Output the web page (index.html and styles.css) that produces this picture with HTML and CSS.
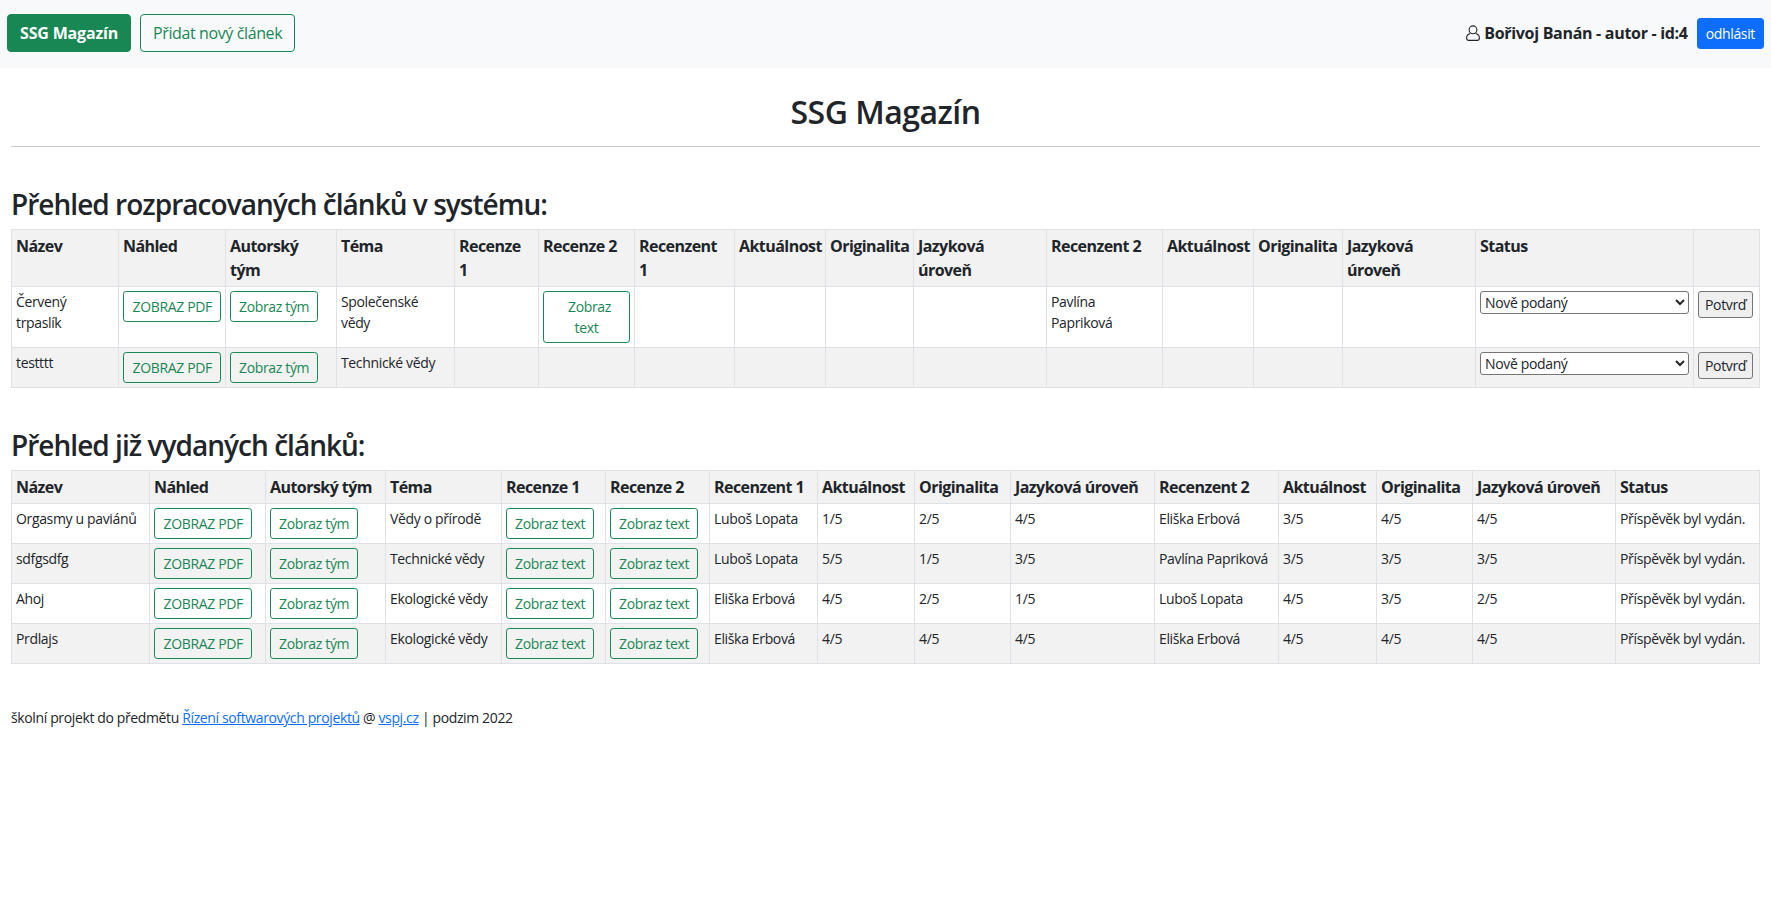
FILE: index.html
```html
<!DOCTYPE html>
<html lang="cs">
  <head>
    <meta charset="UTF-8" />
    <meta name="viewport" content="width=device-width, initial-scale=1.0" />
    <title>SSG Magazín</title>
    <link rel="stylesheet" href="styles.css">
  </head>
  <body>
    <nav class="navbar">
      <div class="nav-left">
        <a class="btn btn-brand" href="#">SSG Magazín</a>
        <a class="btn btn-line" href="#">Přidat nový článek</a>
      </div>
      <div class="nav-right">
        <svg class="user-icon" viewBox="0 0 14 16" fill="none" stroke="currentColor" stroke-width="1.1">
          <circle cx="7" cy="4.8" r="3.9"/>
          <path d="M4.2 8.6C2 9.3.6 10.8.6 13c0 1.4.8 2.4 2.2 2.4h8.4c1.4 0 2.2-1 2.2-2.4 0-2.2-1.4-3.7-3.6-4.4"/>
        </svg>
        <strong class="user-name">Bořivoj Banán - autor - id:4</strong>
        <a class="btn-sm btn-blue" href="#">odhlásit</a>
      </div>
    </nav>

    <main class="content">
      <h1 class="page-title">SSG Magazín</h1>
      <hr class="title-rule" />

      <h2 class="section-title">Přehled rozpracovaných článků v systému:</h2>
      <table class="grid grid-draft">
        <colgroup>
          <col><col><col><col><col><col><col><col><col><col><col><col><col><col><col><col>
        </colgroup>
        <thead>
          <tr>
            <th>Název</th>
            <th>Náhled</th>
            <th>Autorský<br>tým</th>
            <th>Téma</th>
            <th>Recenze<br>1</th>
            <th>Recenze 2</th>
            <th>Recenzent<br>1</th>
            <th>Aktuálnost</th>
            <th>Originalita</th>
            <th>Jazyková<br>úroveň</th>
            <th>Recenzent 2</th>
            <th>Aktuálnost</th>
            <th>Originalita</th>
            <th>Jazyková<br>úroveň</th>
            <th>Status</th>
            <th></th>
          </tr>
        </thead>
        <tbody>
          <tr>
            <td>Červený<br>trpaslík</td>
            <td><a class="btn-sm btn-line btn-caps" href="#">ZOBRAZ PDF</a></td>
            <td><a class="btn-sm btn-line" href="#">Zobraz tým</a></td>
            <td>Společenské<br>vědy</td>
            <td></td>
            <td><a class="btn-sm btn-line btn-wide" href="#">Zobraz<br>text</a></td>
            <td></td>
            <td></td>
            <td></td>
            <td></td>
            <td>Pavlína<br>Papriková</td>
            <td></td>
            <td></td>
            <td></td>
            <td>
              <select class="status-select">
                <option>Nově podaný</option>
              </select>
            </td>
            <td><button class="confirm" type="button">Potvrď</button></td>
          </tr>
          <tr>
            <td>testttt</td>
            <td><a class="btn-sm btn-line btn-caps" href="#">ZOBRAZ PDF</a></td>
            <td><a class="btn-sm btn-line" href="#">Zobraz tým</a></td>
            <td>Technické vědy</td>
            <td></td>
            <td></td>
            <td></td>
            <td></td>
            <td></td>
            <td></td>
            <td></td>
            <td></td>
            <td></td>
            <td></td>
            <td>
              <select class="status-select">
                <option>Nově podaný</option>
              </select>
            </td>
            <td><button class="confirm" type="button">Potvrď</button></td>
          </tr>
        </tbody>
      </table>

      <h2 class="section-title">Přehled již vydaných článků:</h2>
      <table class="grid grid-done">
        <colgroup>
          <col><col><col><col><col><col><col><col><col><col><col><col><col><col><col>
        </colgroup>
        <thead>
          <tr>
            <th>Název</th>
            <th>Náhled</th>
            <th>Autorský tým</th>
            <th>Téma</th>
            <th>Recenze 1</th>
            <th>Recenze 2</th>
            <th>Recenzent 1</th>
            <th>Aktuálnost</th>
            <th>Originalita</th>
            <th>Jazyková úroveň</th>
            <th>Recenzent 2</th>
            <th>Aktuálnost</th>
            <th>Originalita</th>
            <th>Jazyková úroveň</th>
            <th>Status</th>
          </tr>
        </thead>
        <tbody>
          <tr>
            <td>Orgasmy u paviánů</td>
            <td><a class="btn-sm btn-line btn-caps" href="#">ZOBRAZ PDF</a></td>
            <td><a class="btn-sm btn-line" href="#">Zobraz tým</a></td>
            <td>Vědy o přírodě</td>
            <td><a class="btn-sm btn-line" href="#">Zobraz text</a></td>
            <td><a class="btn-sm btn-line" href="#">Zobraz text</a></td>
            <td>Luboš Lopata</td>
            <td>1/5</td>
            <td>2/5</td>
            <td>4/5</td>
            <td>Eliška Erbová</td>
            <td>3/5</td>
            <td>4/5</td>
            <td>4/5</td>
            <td>Příspěvěk byl vydán.</td>
          </tr>
          <tr>
            <td>sdfgsdfg</td>
            <td><a class="btn-sm btn-line btn-caps" href="#">ZOBRAZ PDF</a></td>
            <td><a class="btn-sm btn-line" href="#">Zobraz tým</a></td>
            <td>Technické vědy</td>
            <td><a class="btn-sm btn-line" href="#">Zobraz text</a></td>
            <td><a class="btn-sm btn-line" href="#">Zobraz text</a></td>
            <td>Luboš Lopata</td>
            <td>5/5</td>
            <td>1/5</td>
            <td>3/5</td>
            <td>Pavlína Papriková</td>
            <td>3/5</td>
            <td>3/5</td>
            <td>3/5</td>
            <td>Příspěvěk byl vydán.</td>
          </tr>
          <tr>
            <td>Ahoj</td>
            <td><a class="btn-sm btn-line btn-caps" href="#">ZOBRAZ PDF</a></td>
            <td><a class="btn-sm btn-line" href="#">Zobraz tým</a></td>
            <td>Ekologické vědy</td>
            <td><a class="btn-sm btn-line" href="#">Zobraz text</a></td>
            <td><a class="btn-sm btn-line" href="#">Zobraz text</a></td>
            <td>Eliška Erbová</td>
            <td>4/5</td>
            <td>2/5</td>
            <td>1/5</td>
            <td>Luboš Lopata</td>
            <td>4/5</td>
            <td>3/5</td>
            <td>2/5</td>
            <td>Příspěvěk byl vydán.</td>
          </tr>
          <tr>
            <td>Prdlajs</td>
            <td><a class="btn-sm btn-line btn-caps" href="#">ZOBRAZ PDF</a></td>
            <td><a class="btn-sm btn-line" href="#">Zobraz tým</a></td>
            <td>Ekologické vědy</td>
            <td><a class="btn-sm btn-line" href="#">Zobraz text</a></td>
            <td><a class="btn-sm btn-line" href="#">Zobraz text</a></td>
            <td>Eliška Erbová</td>
            <td>4/5</td>
            <td>4/5</td>
            <td>4/5</td>
            <td>Eliška Erbová</td>
            <td>4/5</td>
            <td>4/5</td>
            <td>4/5</td>
            <td>Příspěvěk byl vydán.</td>
          </tr>
        </tbody>
      </table>

      <footer class="page-foot">
        školní projekt do předmětu <a href="#">Řízení softwarových projektů</a> @ <a href="#">vspj.cz</a> | podzim 2022
      </footer>
    </main>
  </body>
</html>
```

FILE: styles.css
```css
body {
  margin: 0;
  font-family: "Open Sans", "Noto Sans", sans-serif;
  font-size: 16px;
  line-height: 1.5;
  color: #212529;
  background-color: #fff;
}

a {
  text-decoration: none;
}

.navbar {
  display: flex;
  align-items: center;
  justify-content: space-between;
  height: 68px;
  padding: 0 7px 2px;
  box-sizing: border-box;
  background-color: #f8f9fa;
}

.nav-left {
  display: flex;
  gap: 9px;
}

.nav-right {
  display: flex;
  align-items: center;
}

.user-icon {
  width: 14px;
  height: 16px;
  margin-right: 4px;
  margin-top: -1px;
}

.user-name {
  font-size: 16px;
  letter-spacing: -0.3px;
  margin-right: 9px;
  margin-top: -1px;
}

.btn {
  display: inline-block;
  padding: 6px 12px;
  border: 1px solid #198754;
  border-radius: 4px;
  font-size: 16px;
  letter-spacing: -0.39px;
}

.btn-brand {
  background-color: #198754;
  color: #fff;
  font-weight: 700;
  letter-spacing: -0.18px;
}

.btn-line {
  color: #198754;
}

.btn-sm {
  display: inline-block;
  padding: 4px 8px;
  border: 1px solid #198754;
  border-radius: 3.2px;
  font-size: 14px;
  line-height: 21px;
  letter-spacing: -0.35px;
  text-align: center;
}

.btn-blue {
  background-color: #0d6efd;
  border-color: #0d6efd;
  color: #fff;
}

.btn-caps {
  padding: 4px 8.5px;
  white-space: nowrap;
}

.btn-wide {
  display: block;
  padding: 4px 24px;
}

.content {
  padding: 0 11px;
}

.page-title {
  margin: 25px 0 0;
  font-size: 32px;
  font-weight: 600;
  line-height: 38px;
  text-align: center;
  letter-spacing: -0.5px;
}

.title-rule {
  height: 1px;
  margin: 15px 0 0;
  border: none;
  background-color: #ccc;
}

.section-title {
  margin: 40px 0 8px;
  font-size: 28px;
  font-weight: 600;
  line-height: 34px;
  letter-spacing: -0.97px;
}

.grid {
  width: 1748px;
  table-layout: fixed;
  border-collapse: collapse;
}

.grid th,
.grid td {
  padding: 4px;
  border: 1px solid #dee2e6;
  vertical-align: top;
  text-align: left;
}

.grid th {
  background-color: #f2f2f2;
  font-size: 16px;
  font-weight: 700;
  line-height: 24px;
  letter-spacing: -0.55px;
}

.grid td {
  font-size: 14px;
  line-height: 21px;
  letter-spacing: -0.35px;
}

.grid tbody tr:nth-child(even) td {
  background-color: #f2f2f2;
}

.grid-draft col:nth-child(1) { width: 107px; }
.grid-draft col:nth-child(2) { width: 107px; }
.grid-draft col:nth-child(3) { width: 111px; }
.grid-draft col:nth-child(4) { width: 118px; }
.grid-draft col:nth-child(5) { width: 84px; }
.grid-draft col:nth-child(6) { width: 96px; }
.grid-draft col:nth-child(7) { width: 100px; }
.grid-draft col:nth-child(8) { width: 91px; }
.grid-draft col:nth-child(9) { width: 88px; }
.grid-draft col:nth-child(10) { width: 133px; }
.grid-draft col:nth-child(11) { width: 116px; }
.grid-draft col:nth-child(12) { width: 91px; }
.grid-draft col:nth-child(13) { width: 89px; }
.grid-draft col:nth-child(14) { width: 133px; }
.grid-draft col:nth-child(15) { width: 218px; }
.grid-draft col:nth-child(16) { width: 66px; }

.grid-done col:nth-child(1) { width: 138px; }
.grid-done col:nth-child(2) { width: 116px; }
.grid-done col:nth-child(3) { width: 120px; }
.grid-done col:nth-child(4) { width: 116px; }
.grid-done col:nth-child(5) { width: 104px; }
.grid-done col:nth-child(6) { width: 104px; }
.grid-done col:nth-child(7) { width: 108px; }
.grid-done col:nth-child(8) { width: 97px; }
.grid-done col:nth-child(9) { width: 96px; }
.grid-done col:nth-child(10) { width: 144px; }
.grid-done col:nth-child(11) { width: 124px; }
.grid-done col:nth-child(12) { width: 98px; }
.grid-done col:nth-child(13) { width: 96px; }
.grid-done col:nth-child(14) { width: 143px; }
.grid-done col:nth-child(15) { width: 144px; }

.status-select {
  display: block;
  width: 100%;
  height: 23px;
  padding: 0;
  border: 1px solid #767676;
  border-radius: 3px;
  background-color: #fff;
  color: #212529;
  font-family: inherit;
  font-size: 14px;
  letter-spacing: -0.35px;
}

.confirm {
  display: block;
  height: 27px;
  padding: 1px 6px;
  border: 1px solid #767676;
  border-radius: 3px;
  background-color: #efefef;
  color: #212529;
  font-family: inherit;
  font-size: 14px;
  letter-spacing: -0.35px;
}

.page-foot {
  margin-top: 43px;
  font-size: 14px;
  line-height: 21px;
  letter-spacing: -0.37px;
}

.page-foot a {
  color: #0d6efd;
  text-decoration: underline;
}
```
